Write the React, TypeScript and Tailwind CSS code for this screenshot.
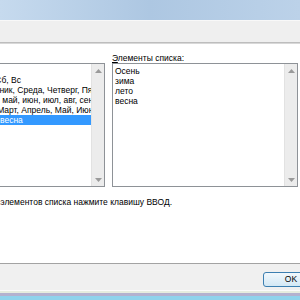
import React from "react";

const leftItems = [
  "НОВЫЙ СПИСОК",
  "Пн, Вт, Ср, Чт, Пт, Сб, Вс",
  "Понедельник, Вторник, Среда, Четверг, Пятница, Суббота, Воскресенье",
  "янв, фев, мар, апр, май, июн, июл, авг, сен, окт, ноя, дек",
  "Январь, Февраль, Март, Апрель, Май, Июнь, Июль, Август",
  "Осень, зима, лето, весна",
];

const rightItems = ["Осень", "зима", "лето", "весна"];

function Arrow({ up }: { up?: boolean }) {
  return (
    <svg width="7" height="4" viewBox="0 0 7 4" className="block">
      <path d={up ? "M0 4 L3.5 0 L7 4 Z" : "M0 0 L3.5 4 L7 0 Z"} fill="#9a9a9a" />
    </svg>
  );
}

function ScrollBar() {
  return (
    <div className="w-[13px] shrink-0 flex flex-col justify-between bg-[#ececec] border-l border-[#e2e2e2]">
      <div className="h-[13px] flex items-center justify-center">
        <Arrow up />
      </div>
      <div className="h-[13px] flex items-center justify-center">
        <Arrow />
      </div>
    </div>
  );
}

export default function App() {
  return (
    <div className="w-[300px] h-[300px] overflow-hidden bg-white flex flex-col text-[8.5px] leading-[10px] text-black font-['Liberation_Sans',Arial,sans-serif]">
      <div className="h-[20px] shrink-0 bg-linear-to-r from-[#c6daee] via-[#adc7e2] to-[#bcd2e9]" />
      <div className="h-px shrink-0 bg-[#f8f8f8]" />
      <div className="h-[21px] shrink-0 bg-[#efefef]" />
      <div className="h-px shrink-0 bg-[#bdbdbd]" />
      <div className="h-px shrink-0 bg-[#d8d8d8]" />

      <div className="flex-1 flex flex-col pt-[9px]">
        <div className="flex">
          <div className="w-[185px] -ml-[80px] shrink-0 flex flex-col">
            <div className="h-[10px]" />
            <div className="h-[124px] flex border border-[#8e9297] bg-white">
              <div className="flex-1 min-w-0 overflow-hidden pt-px">
                {leftItems.map((t, i) => (
                  <div
                    key={t}
                    className={`h-[10px] pl-[3px] whitespace-nowrap ${i === 5 ? "bg-[#3399ff] text-white" : ""}`}
                  >
                    {t}
                  </div>
                ))}
              </div>
              <ScrollBar />
            </div>
          </div>

          <div className="w-[186px] ml-[7px] shrink-0 flex flex-col">
            <div className="h-[10px] whitespace-nowrap">
              <span className="underline">Э</span>лементы списка:
            </div>
            <div className="h-[124px] flex border border-[#8e9297] bg-white">
              <div className="flex-1 pt-[2px] pl-[2px]">
                {rightItems.map((t) => (
                  <div key={t} className="h-[10px]">
                    {t}
                  </div>
                ))}
              </div>
              <ScrollBar />
            </div>
          </div>
        </div>

        <div className="w-[172px] mt-[10px] flex justify-end whitespace-nowrap">
          Для разделения элементов списка нажмите клавишу ВВОД.
        </div>
      </div>

      <div className="h-px shrink-0 bg-[#a3a3a3]" />
      <div className="h-[26px] shrink-0 bg-[#f0f0f0] flex pl-[263px] pt-[8px]">
        <button className="w-[56px] h-[15px] shrink-0 rounded-[3px] border border-[#3c7fb1] bg-linear-to-b from-[#f2f8fc] to-[#d3e8f5] text-[8.5px] leading-[13px] text-black">
          OK
        </button>
      </div>
      <div className="h-px shrink-0 bg-[#fafafa]" />
      <div className="h-[2px] shrink-0 bg-[#e6eddf]" />
      <div className="h-[3px] shrink-0 bg-[#b3b2cf]" />
      <div className="h-[4px] shrink-0 bg-[#8fd3ec]" />
    </div>
  );
}
